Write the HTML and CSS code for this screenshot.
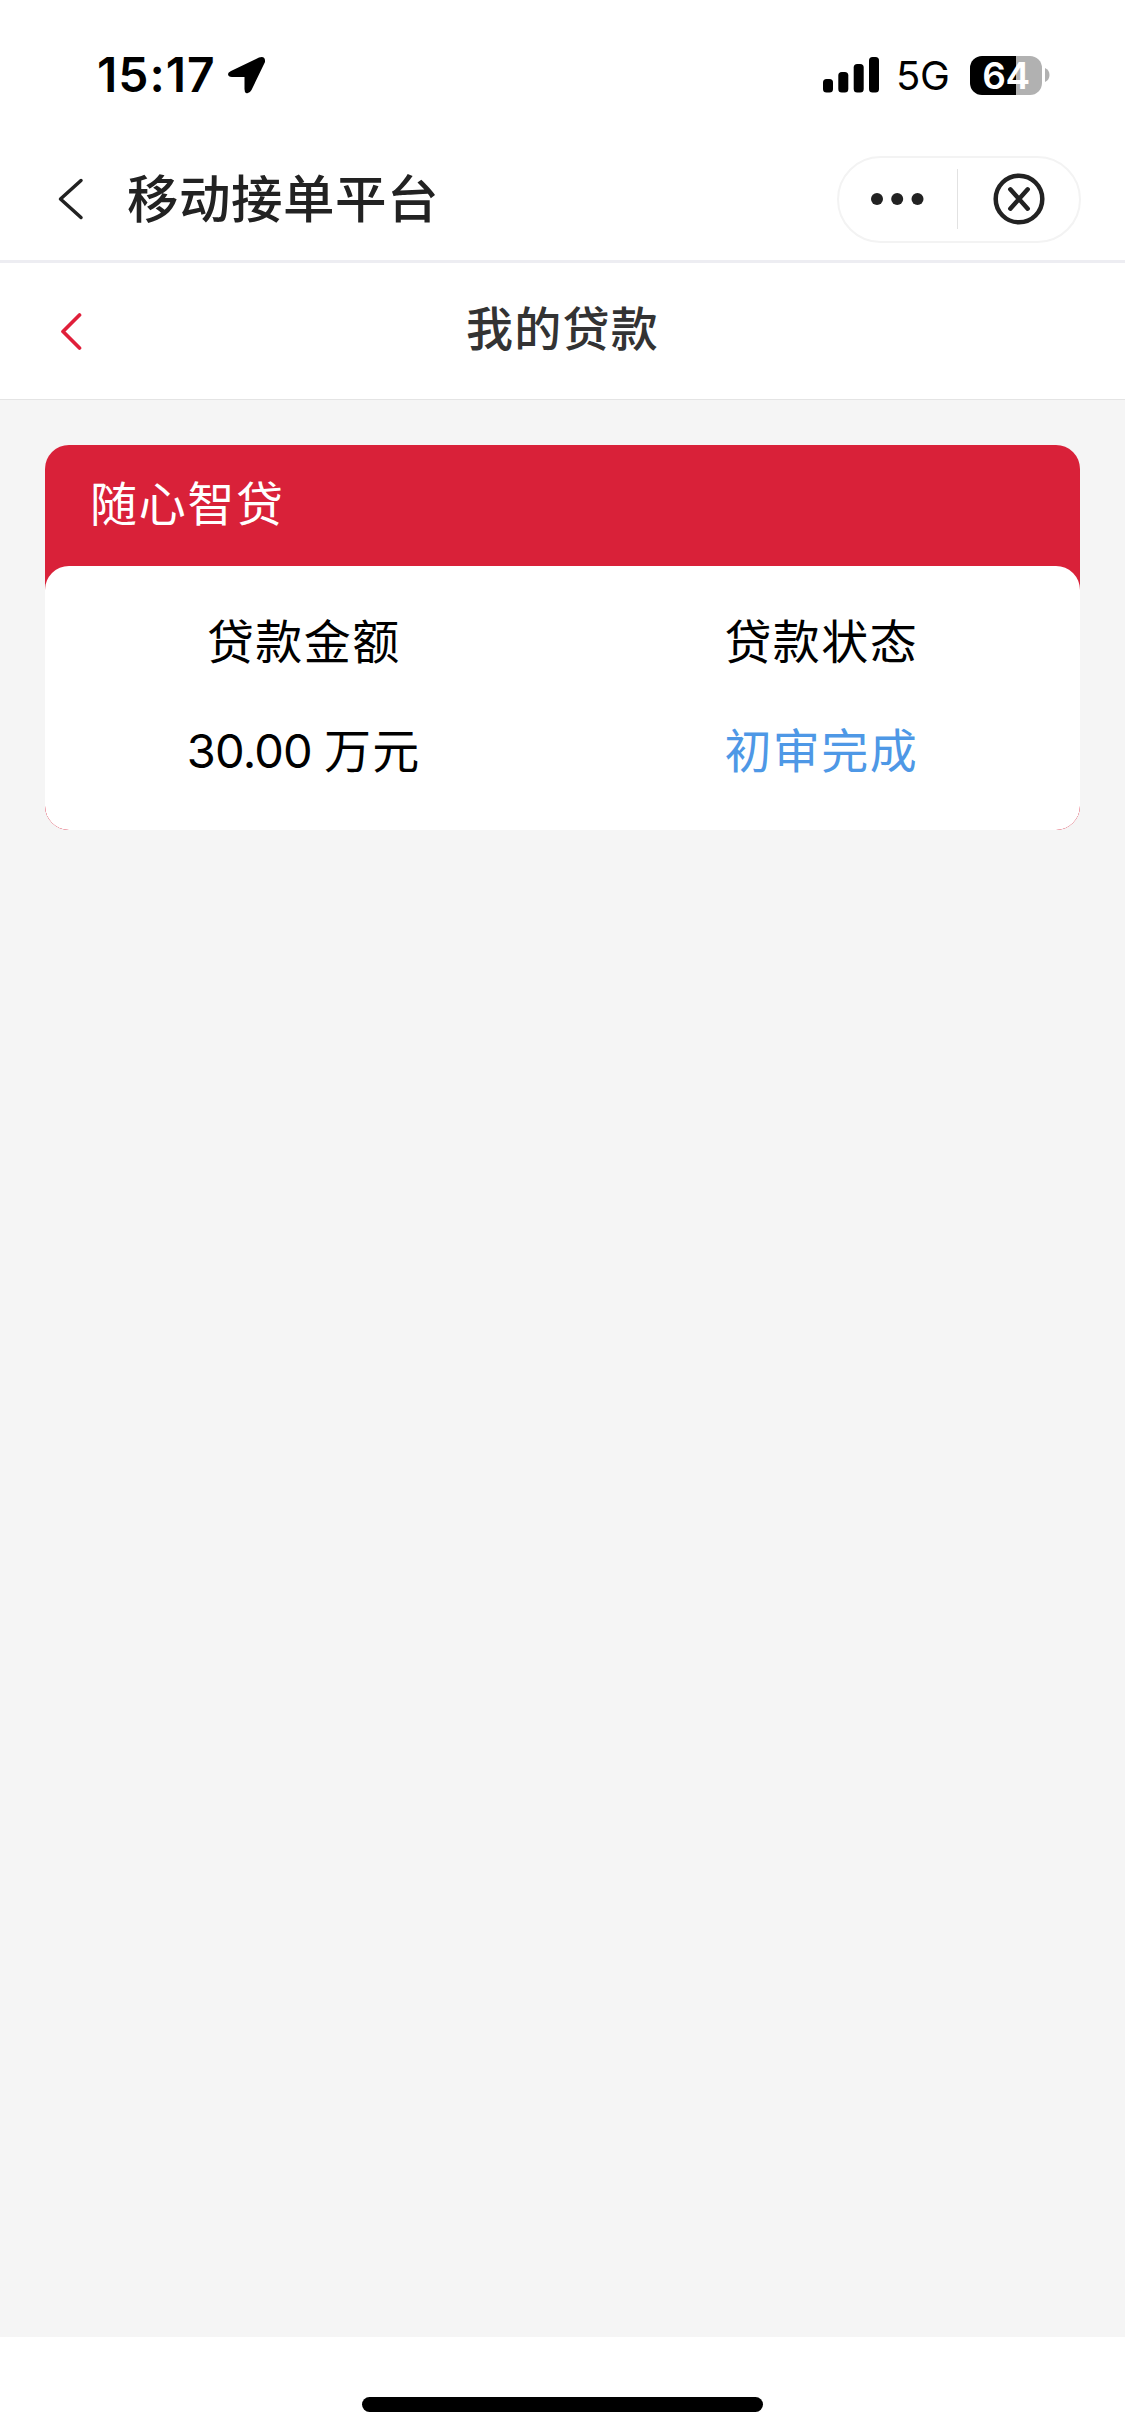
FILE: index.html
```html
<!DOCTYPE html>
<html lang="zh-CN">
<head>
<meta charset="utf-8">
<title>我的贷款</title>
<link rel="stylesheet" href="styles.css">
</head>
<body>
<div class="status">
  <span class="time">15:17</span>
  <svg class="locate" width="38" height="38" viewBox="0 0 38 38"><path d="M3 15 L31 1.500 Q37.500 -.5 37 6 L23.500 34 Q21.500 38 18 37 Q16.500 36 16.500 33 V21 H4 Q0 21 0 18 Q0 16.500 3 15Z"/></svg>
  <svg class="signal" width="56" height="36" viewBox="0 0 56 36"><rect y="22" width="10" height="13.500" rx="3.500"/><rect x="15.300" y="15" width="10" height="20.500" rx="3.500"/><rect x="30.700" y="7" width="10" height="28.500" rx="3.500"/><rect x="46" width="10" height="35.500" rx="3.500"/></svg>
  <span class="network">5G</span>
  <span class="battery">64</span>
  <svg class="nub" width="5" height="14" viewBox="0 0 5 14"><path d="M0 0 Q4.500 2 4.500 7 T0 14Z"/></svg>
</div>
<header class="appbar">
  <svg class="back" width="28" height="42" viewBox="0 0 28 42"><path d="M25 2.500 L4.500 21 L25 39.500"/></svg>
  <h1 class="app-title">移动接单平台</h1>
  <div class="capsule">
    <svg class="dots" width="53" height="12" viewBox="0 0 53 12"><circle cx="6" cy="6" r="6"/><circle cx="26.200" cy="6" r="6"/><circle cx="46.500" cy="6" r="6"/></svg>
    <span class="divider"></span>
    <svg class="close" width="52" height="52" viewBox="0 0 52 52"><circle cx="26" cy="26" r="23.300"/><path d="M17.300 16.300 L34.700 35.700 M34.700 16.300 L17.300 35.700"/></svg>
  </div>
</header>
<nav class="pagebar">
  <svg class="page-back" width="24" height="40" viewBox="0 0 24 40"><path d="M21.500 4 L5 20.500 L21.500 37"/></svg>
  <h2 class="page-title">我的贷款</h2>
</nav>
<main class="content">
  <section class="card">
    <h3 class="product">随心智贷</h3>
    <dl class="details">
      <div class="item"><dt>贷款金额</dt><dd><span class="number">30.00</span>万元</dd></div>
      <div class="item"><dt>贷款状态</dt><dd class="state">初审完成</dd></div>
    </dl>
  </section>
</main>
<footer class="bottom"><div class="home"></div></footer>
</body>
</html>
```
FILE: styles.css
```css
* { box-sizing: border-box; }
body {
  margin: 0;
  width: 1125px;
  height: 2435px;
  display: flex;
  flex-direction: column;
  background: #fff;
  color: #000;
  font-family: Inter, "Noto Sans CJK SC", sans-serif;
}
h1, h2, h3, dl, dd { margin: 0; }
svg { display: block; flex: none; }
.status {
  height: 150px;
  padding: 0 75px 0 97px;
  display: flex;
  align-items: center;
}
.time { width: 131px; font-size: 48px; font-weight: 600; line-height: 60px; letter-spacing: 1px; white-space: nowrap; }
.signal { margin-left: 557px; margin-right: 17px; margin-bottom: 1px; }
.network { width: 74px; font-size: 40px; line-height: 50px; letter-spacing: -.3px; white-space: nowrap; margin-top: 2px; }
.battery {
  width: 72px;
  height: 39px;
  border-radius: 12px;
  background: linear-gradient(90deg, #000 46px, #b1b1b1 46px);
  color: #fff;
  font-size: 37px;
  font-weight: 600;
  line-height: 39px;
  text-align: center;
  letter-spacing: -.5px;
}
.nub { margin-left: 3px; fill: #b1b1b1; }
.appbar {
  height: 113px;
  padding: 0 44px 12px 56px;
  display: flex;
  align-items: center;
  border-bottom: 3px solid #ededf2;
}
.back { fill: none; stroke: #222; stroke-width: 3.500; stroke-linecap: round; stroke-linejoin: round; }
.app-title { margin-left: 43px; color: #222; font-size: 51.500px; font-weight: 500; line-height: 76px; letter-spacing: .5px; }
.capsule {
  width: 244px;
  height: 87px;
  margin-left: auto;
  padding-left: 32px;
  display: flex;
  align-items: center;
  border: 2px solid #f3f3f3;
  border-radius: 44px;
}
.dots { fill: #222; }
.divider { width: 1px; height: 60px; margin-left: 33px; background: #e2e2e2; }
.close { margin-left: 35px; fill: none; stroke: #222; stroke-width: 4.500; stroke-linecap: round; }
.pagebar {
  height: 137px;
  padding: 0 58px;
  display: grid;
  grid-template-columns: 24px 1fr 24px;
  align-items: center;
  border-bottom: 1px solid #e4e4e4;
}
.page-back { fill: none; stroke: #e01f3a; stroke-width: 3.700; stroke-linecap: round; stroke-linejoin: round; }
.page-title { padding-bottom: 4px; text-align: center; color: #333; font-size: 47px; font-weight: 500; line-height: 68px; letter-spacing: 1.300px; }
.content { flex: 1; padding: 45px; background: #f5f5f5; }
.card { height: 385px; border-radius: 24px; background: #d92139; overflow: hidden; }
.product { height: 121px; padding-left: 45px; color: #fff; font-size: 47px; font-weight: 400; line-height: 118px; letter-spacing: 1.700px; }
.details {
  height: 264px;
  padding-top: 42px;
  display: grid;
  grid-template-columns: 1fr 1fr;
  border-radius: 24px;
  background: #fff;
}
.item { text-align: center; font-size: 47px; line-height: 68px; letter-spacing: 1.400px; }
.item dd { margin-top: 41px; }
.number { margin-right: 12px; font-size: 47px; letter-spacing: -.8px; }
.item .state { color: #4e98e6; }
.bottom { height: 98px; padding-top: 60px; }
.home { width: 401px; height: 15px; margin: 0 auto; border-radius: 8px; background: #000; }
```
